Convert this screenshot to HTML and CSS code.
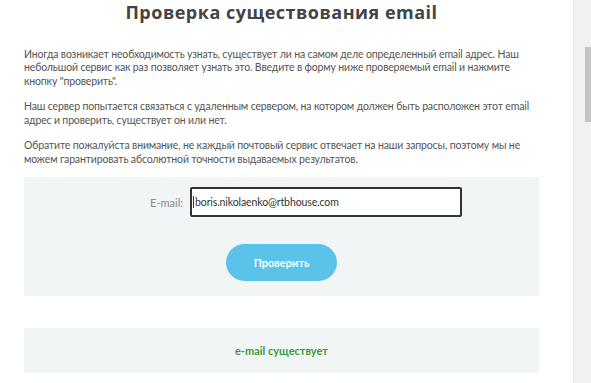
FILE: index.html
```html
<!DOCTYPE html>
<html lang="ru">
<head>
<meta charset="utf-8">
<title>Проверка существования email</title>
<link rel="stylesheet" href="styles.css">
</head>
<body>
<div class="page">
  <main class="content">
    <h1 class="title">Проверка существования email</h1>
    <p class="text">Иногда возникает необходимость узнать, существует ли на самом деле определенный email адрес. Наш небольшой сервис как раз позволяет узнать это. Введите в форму ниже проверяемый email и нажмите кнопку "проверить".</p>
    <p class="text">Наш сервер попытается связаться с удаленным сервером, на котором должен быть расположен этот email адрес и проверить, существует он или нет.</p>
    <p class="text">Обратите пожалуйста внимание, не каждый почтовый сервис отвечает на наши запросы, поэтому мы не можем гарантировать абсолютной точности выдаваемых результатов.</p>
    <form class="panel form">
      <div class="field">
        <label class="label" for="email">E-mail:</label>
        <div class="input"><span class="caret"></span>boris.nikolaenko@rtbhouse.com</div>
      </div>
      <div class="actions">
        <span class="button">Проверить</span>
      </div>
    </form>
    <div class="panel result">e-mail существует</div>
  </main>
  <div class="scrollbar"><div class="thumb"></div></div>
</div>
</body>
</html>
```

FILE: styles.css
```css
html, body {
  margin: 0;
  padding: 0;
  background: #ffffff;
  height: 100%;
  overflow: hidden;
}
body {
  font-family: Lato, "Open Sans", sans-serif;
  color: #555555;
}
.page {
  display: flex;
  height: 383px;
}
.content {
  flex: 1;
  padding: 0 34px 0 24px;
}
.title {
  margin: 0;
  font-family: "Open Sans", Lato, sans-serif;
  font-weight: 700;
  font-size: 18px;
  letter-spacing: 0.5px;
  line-height: normal;
  text-align: center;
  color: #444444;
}
.text {
  margin: 23.5px 0 0;
  font-size: 10.5px;
  letter-spacing: -0.15px;
  line-height: 13.5px;
  color: #555555;
}
.text + .text {
  margin-top: 12px;
}
.panel {
  background: #f2f5f6;
}
.form {
  margin-top: 11px;
  padding: 10px 0 15px;
  display: flex;
  flex-direction: column;
  gap: 27px;
}
.field {
  display: flex;
  align-items: center;
  padding-left: 125px;
  gap: 7px;
}
.label {
  width: 34px;
  text-align: right;
  font-size: 11px;
  color: #8a8a8a;
}
.input {
  width: 267px;
  height: 26px;
  border: 2px solid #333333;
  border-radius: 2px;
  background: #ffffff;
  display: flex;
  align-items: center;
  padding-left: 1px;
  font-size: 10.5px;
  letter-spacing: -0.1px;
  color: #333333;
}
.caret {
  width: 1px;
  height: 12px;
  background: #333;
  margin-right: 1px;
}
.actions {
  display: flex;
  justify-content: center;
}
.button {
  width: 111px;
  height: 37px;
  border-radius: 19px;
  background: #5bc3ea;
  color: #ffffff;
  font-weight: 700;
  font-size: 11px;
  display: flex;
  align-items: center;
  justify-content: center;
}
.result {
  margin-top: 32px;
  height: 45px;
  display: flex;
  align-items: center;
  justify-content: center;
  font-weight: 700;
  font-size: 11px;
  color: #3a9a3a;
}
.scrollbar {
  width: 17px;
  background: #f1f1f1;
  border-left: 1px solid #e9e9e9;
  display: flex;
  justify-content: flex-end;
  padding-top: 47px;
}
.thumb {
  width: 6px;
  height: 75px;
  background: #c4c4c4;
}
```
